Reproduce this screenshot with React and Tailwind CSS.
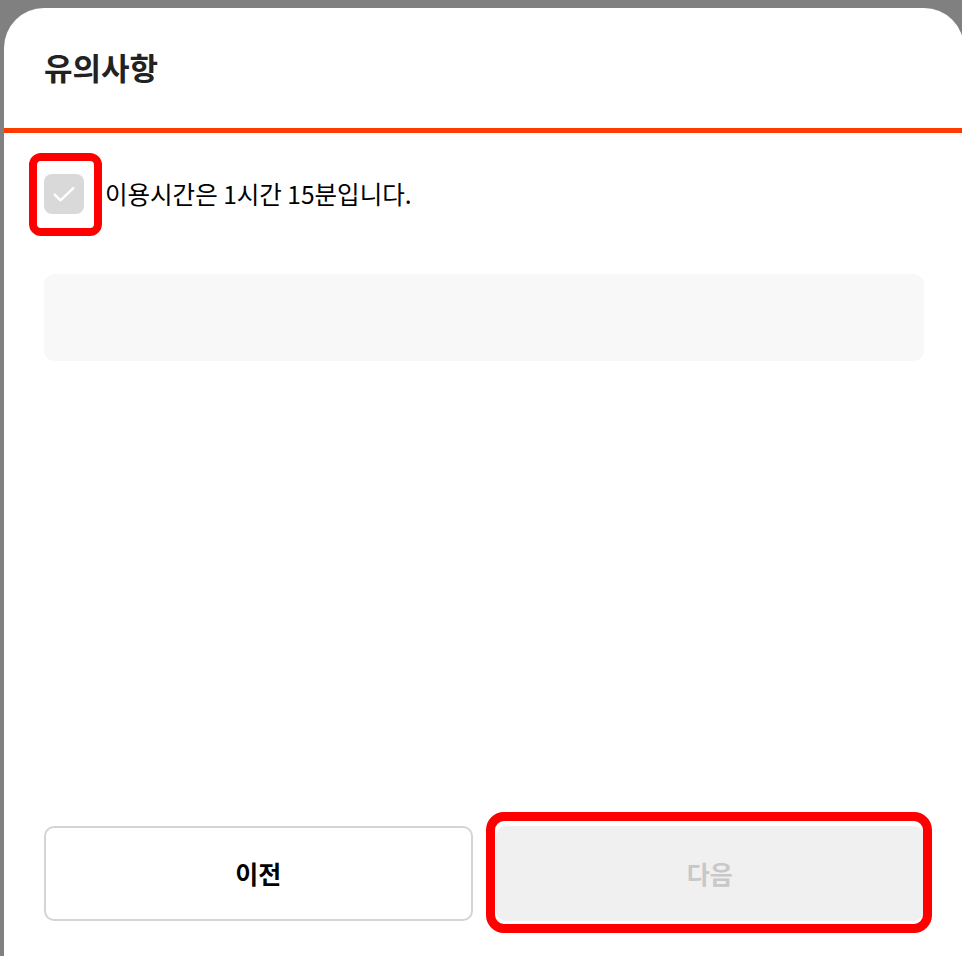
import React from "react";

const font = { fontFamily: '"Noto Sans CJK KR", "Noto Sans", sans-serif' };

export default function App() {
  return (
    <div className="h-[956px] w-full overflow-hidden bg-[#808080] pl-1 pt-2" style={font}>
      <div className="flex h-[948px] w-[960px] flex-col rounded-t-[40px] bg-white">
        {/* header */}
        <div className="flex h-[120px] items-center px-10">
          <h2 className="-mt-[4px] text-[31px] font-bold leading-none text-[#222222]">유의사항</h2>
        </div>
        <div className="h-[5px] bg-[#ff3c00]" />

        {/* body */}
        <div className="flex flex-1 flex-col px-10 pt-[41px] pb-[35px]">
          <div className="flex items-center gap-[21px]">
            <div className="relative">
              <div className="flex h-10 w-10 items-center justify-center rounded-lg bg-[#d9d9d9]">
                <svg className="h-7 w-7" viewBox="0 0 24 24" fill="none" stroke="white" strokeWidth="2" strokeLinecap="round" strokeLinejoin="round">
                  <path d="M4 12.5l5 5L20 7" />
                </svg>
              </div>
              <div className="pointer-events-none absolute -left-[15px] -top-[21px] h-[83px] w-[73px] rounded-[12px] border-[8px] border-[#ff0000]" />
            </div>
            <p className="text-[24.5px] leading-none text-black">이용시간은 1시간 15분입니다.</p>
          </div>

          <div className="mt-[60px] h-[87px] rounded-[10px] bg-[#f8f8f8]" />

          <div className="mt-auto grid grid-cols-2 gap-[23px]">
            <button className="h-[95px] rounded-[10px] border-2 border-[#d4d4d4] bg-white text-[25px] font-bold text-black">
              이전
            </button>
            <div className="relative">
              <button className="h-[95px] w-full rounded-[10px] bg-[#f0f0f0] text-[25px] font-bold text-[#c8c8c8]">
                다음
              </button>
              <div className="pointer-events-none absolute -left-[10px] -top-[14px] h-[121px] w-[446px] rounded-[18px] border-[9px] border-[#ff0000]" />
            </div>
          </div>
        </div>
      </div>
    </div>
  );
}
